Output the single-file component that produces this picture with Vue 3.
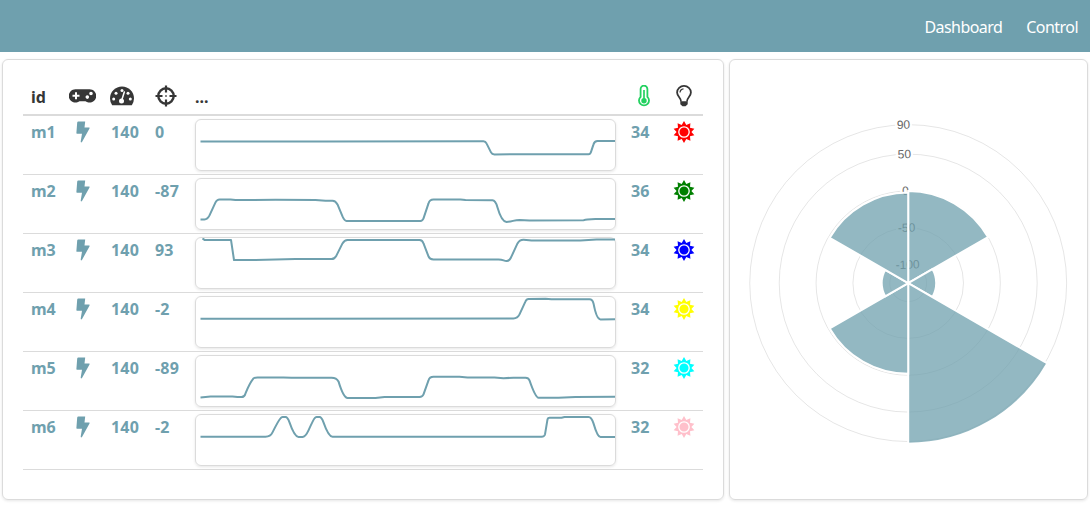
<script setup>
const rows = [
  { id: 'm1', speed: 140, angle: 0, temp: 34, led: 'red', d: 'M5 22L130 22L288 21.8Q290 21.8 291 24L295.5 33Q296.500 35 299 35L393 34.8Q395 34.8 396 31L398 25Q399 21.7 402 21.7L421 21.7' },
  { id: 'm2', speed: 140, angle: -87, temp: 36, led: 'green', d: 'M5 41H9Q12 41 14 37L20 24Q21.500 21 24 21H35L40 21.600L80 21.400L120 21.700L130 22.300H137Q140 22.300 142 26L147 38Q149 42.500 151 42.500H225Q227 42.500 228 40L233 25Q234 21 238 21H265L270 21.500L297 21.900Q300 22 302 29Q306 43 311 43.500C317 43.500 318 41.500 324 41.500L334 42L388 41.800C394 41 394 40.600 400 40.600H421' },
  { id: 'm3', speed: 140, angle: 93, temp: 34, led: 'blue', d: 'M7 1L9 2.500H35.500L38.500 22.600L60 22.500L100 21.700H136Q139 21.700 141 18L147 6Q149 2.500 152 2.500H224Q227 2.500 228 6L233 19Q234 22 238 22H303C308 22 308 23.600 311 23.600Q314 24 316 19L322 6Q324 2.300 328 2.300C333 2.300 334 3.200 338 3.200L385 3L401 2.200H421' },
  { id: 'm4', speed: 140, angle: -2, temp: 34, led: 'yellow', d: 'M5 22.300L90 22.300L318 22Q322 22 324 18L330 5Q331 2.500 333 2.500L350 2.300L356 2.900H394Q397 2.900 398 7Q401 23 405 23L421 22.700' },
  { id: 'm5', speed: 140, angle: -89, temp: 32, led: 'cyan', d: 'M5 42L15 41.200H37L42 41.700H46Q49 41.700 50 38Q54 28 58 23Q59 22 62 22H88L96 22.300L136 22.300Q141 22.300 143 26Q148 42.500 152 42.500H180L189 41.500H224Q227 41.500 228 39L233 25Q234 21.400 238 21.400H264L272 22L299 22L308 22.800L318 22.300H330Q333 22.300 334 25Q340 42.300 343 42.300H363L380 41.600L421 41.300' },
  { id: 'm6', speed: 140, angle: -2, temp: 32, led: 'pink', d: 'M5 22.300H70Q75 22.300 77 18Q83 6 85 4Q86 2.700 87 2.700H90Q92 2.700 94 8Q99 22.500 103 22.500H107Q110 22.500 113 16Q118 5 119 4Q120 2.700 121 2.700H124Q126 2.700 128 8Q133 22.300 137 22.300H346Q349 22.300 349.500 20L352 5Q352.500 3.300 354 3.300H366L369 2.600H393Q396 2.600 398 9Q402 22.700 405 22.700H421' },
]

const cx = 158.2
const cy = 163.1
const unit = 0.737
const rings = [-100, -50, 0, 50, 90].map((value) => ({ value, r: (value + 125) * unit, w: { '-100': 24.7, '-50': 17.3, 0: 6.7, 50: 13.3, 90: 13.3 }[value] + 4 }))

function sector(value, i) {
  const r = (value + 125) * unit
  const point = (k) => {
    const a = (k * Math.PI) / 3 - Math.PI / 2
    return `${cx + r * Math.cos(a)} ${cy + r * Math.sin(a)}`
  }
  return `M${cx} ${cy}L${point(i)}A${r} ${r} 0 0 1 ${point(i + 1)}Z`
}
const sectors = rows.map((row, i) => sector(row.angle, i))

const sun = Array.from({ length: 20 }, (_, i) => {
  const r = i % 2 ? 7.4 : 10.9
  const a = (i * Math.PI) / 10 - Math.PI / 2
  return `${11 + r * Math.cos(a)},${11 + r * Math.sin(a)}`
}).join(' ')
</script>

<template>
  <div class="page">
    <nav class="navbar">
      <a>Dashboard</a>
      <a>Control</a>
    </nav>
    <main class="content">
      <section class="card table-card">
        <div class="row head">
          <span class="id">id</span>
          <span class="pad">
            <svg width="27" height="16" viewBox="0 0 27 16"><path fill="#363636" fill-rule="evenodd" d="M7 1.200H20A6.700 6.700 0 1 1 16.500 13.200H10.500A6.700 6.700 0 1 1 7 1.200ZM6 4.200V6.700H3.500V8.700H6V11.200H8V8.700H10.500V6.700H8V4.200ZM18.300 7.300A1.800 1.800 0 1 0 18.300 10.900A1.800 1.800 0 1 0 18.300 7.300ZM22 3.700A1.800 1.800 0 1 0 22 7.300A1.800 1.800 0 1 0 22 3.700Z" /></svg>
          </span>
          <span class="speed">
            <svg width="24" height="20" viewBox="0 0 24 20"><path fill="#363636" d="M2.200 19.200Q0 16 0 12.500A12 12 0 0 1 24 12.500Q24 16 21.800 19.200Z" /><g fill="#fff"><circle cx="3.700" cy="13" r="1.500" /><circle cx="6" cy="7.300" r="1.500" /><circle cx="12" cy="4.600" r="1.500" /><circle cx="18" cy="7.300" r="1.500" /><circle cx="20.300" cy="13" r="1.500" /><circle cx="11.500" cy="15" r="2.500" /></g><path d="M11.800 14L14.300 6" stroke="#fff" stroke-width="1.500" stroke-linecap="round" /></svg>
          </span>
          <span class="angle">
            <svg width="22" height="22" viewBox="0 0 22 22" fill="none" stroke="#363636"><circle cx="11" cy="11" r="7.700" stroke-width="2.400" /><path stroke-width="2.200" d="M11 .5V7.500M11 14.500V21.500M.5 11H7.500M14.500 11H21.500" /><path stroke-width="1.600" d="M10.200 11H11.800" /></svg>
          </span>
          <span class="plot">...</span>
          <span class="temp">
            <svg width="12" height="22" viewBox="0 0 12 22" fill="none" stroke="#23d160"><path stroke-width="1.800" d="M2.600 4A3.400 3.400 0 0 1 9.400 4V11.800A5 5 0 1 1 2.600 11.800Z" /><path stroke-width="1.700" d="M6 5V14" /><circle cx="6" cy="15.800" r="2.700" fill="#23d160" stroke="none" /></svg>
          </span>
          <span class="led">
            <svg width="16" height="22" viewBox="0 0 16 22" fill="none" stroke="#363636"><path stroke-width="1.800" d="M5 16.500C5 12.500 1.100 11.500 1.100 7.500A6.900 6.600 0 0 1 14.900 7.500C14.900 11.500 11 12.500 11 16.500" /><path stroke-width="1.200" d="M4 7.500Q4.200 4.200 7.500 3.800" /><path fill="#363636" stroke="none" d="M4.300 16.300H11.700V19.200L9.500 21.200H6.500L4.300 19.200Z" /></svg>
          </span>
        </div>
        <div v-for="row in rows" :key="row.id" class="row">
          <span class="id">{{ row.id }}</span>
          <span class="pad bolt">
            <svg width="14" height="22" viewBox="0 0 14 22"><path fill="#6fa0ae" d="M2.200.5H9.200L8.500 6.500H13.300Q13.800 6.700 13.500 7.500L6 21Q4.800 22 4.700 20.500L6 12.800H1Q.3 12.700.4 12L1.200 1.400Q1.400.5 2.200.5Z" /></svg>
          </span>
          <span class="speed">{{ row.speed }}</span>
          <span class="angle">{{ row.angle }}</span>
          <span class="plot">
            <span class="chart"><svg width="419" height="50" viewBox="0.500 0.600 419 50"><path :d="row.d" fill="none" stroke="#6fa0ae" stroke-width="2" stroke-linejoin="round" /></svg></span>
          </span>
          <span class="temp">{{ row.temp }}</span>
          <span class="led">
            <svg width="22" height="22" viewBox="0 0 22 22"><polygon :points="sun" :fill="row.led" /><circle cx="11" cy="11" r="5.200" :fill="row.led" stroke="#fff" stroke-width="1.300" /></svg>
          </span>
        </div>
      </section>
      <section class="card polar-card">
        <svg width="318" height="400" viewBox="0 0 318 400">
          <circle v-for="ring in rings" :key="ring.value" :cx="cx" :cy="cy" :r="ring.r" fill="none" stroke="rgba(0,0,0,0.1)" />
          <g :transform="`rotate(-1.700 ${cx} ${cy})`">
            <g v-for="ring in rings" :key="ring.value">
              <rect :x="cx - ring.w / 2" :y="cy - ring.r - 8" :width="ring.w" height="16" fill="rgba(255,255,255,0.85)" />
              <text :x="cx" :y="cy - ring.r + 4" text-anchor="middle">{{ ring.value }}</text>
            </g>
          </g>
          <path v-for="(d, i) in sectors" :key="i" :d="d" fill="rgba(111,160,174,0.75)" stroke="#fff" stroke-width="2" />
        </svg>
      </section>
    </main>
  </div>
</template>

<style>
body { background: #fff; }
</style>

<style scoped>
.page { width: 1090px; height: 506px; overflow: hidden; font: 16px/24px "Noto Sans", "Open Sans", sans-serif; }
.navbar { height: 52px; box-sizing: border-box; background: #6fa0ae; display: flex; justify-content: flex-end; gap: 24px; padding: 15px 12px 0 0; color: #fff; letter-spacing: -0.550px; }
.content { display: flex; gap: 5px; padding: 7px 2px 0; }
.card { box-sizing: border-box; height: 441px; border: 1px solid #dbdbdb; border-radius: 6px; box-shadow: 0 1px 3px rgba(0, 0, 0, 0.1); }
.table-card { width: 722px; padding: 19px 20px; }
.polar-card { width: 359px; padding: 60px 0 0 20px; }
.polar-card svg { display: block; overflow: visible; }
.polar-card text { font: 12px "Liberation Sans", Arial, sans-serif; fill: #666; }
.row { box-sizing: border-box; height: 59px; width: 680px; border-bottom: 1px solid #dbdbdb; display: grid; grid-template-columns: 38px 42px 44px 40px 436px 41px 31px; padding: 3px 0 3px 8px; font-weight: 700; color: #6fa0ae; line-height: 27px; }
.head { height: 37px; border-bottom-width: 2px; color: #363636; padding-top: 5px; }
.row svg { display: block; }
.head .pad { padding-top: 4px; }
.head .speed { padding-top: 2px; margin-left: -1px; }
.head .angle, .head .temp, .head .led { padding-top: 1px; }
.head .temp { padding-left: 7px; }
.head .led { padding-left: 4px; }
.bolt { padding: 2px 0 0 7px; }
.speed, .angle, .temp { white-space: nowrap; letter-spacing: 0.200px; }
.led { padding-top: 2px; padding-left: 1px; }
.chart { display: block; box-sizing: border-box; width: 421px; height: 52px; border: 1px solid #dbdbdb; border-radius: 6px; box-shadow: 0 1px 3px rgba(0, 0, 0, 0.1); }
</style>
